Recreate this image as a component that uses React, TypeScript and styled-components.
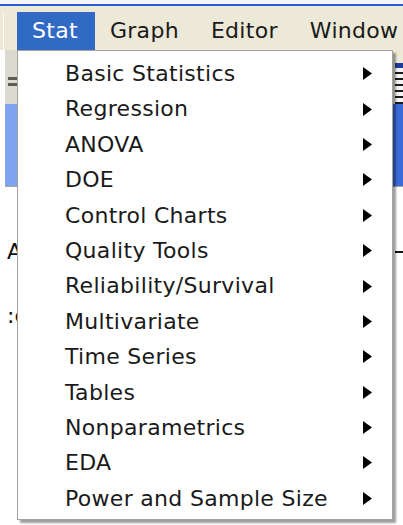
import React from "react";
import styled, { createGlobalStyle } from "styled-components";

const GlobalStyle = createGlobalStyle`
  html, body { margin: 0; padding: 0; background: #ffffff; }
  body { font-family: "DejaVu Sans", Verdana, sans-serif; }
`;

const Screen = styled.div`
  position: relative;
  width: 403px;
  height: 525px;
  overflow: hidden;
  display: flex;
  flex-direction: column;
  background: #ffffff;
  font-family: "DejaVu Sans", Verdana, sans-serif;
`;

const TitleEdge = styled.div`
  flex: none;
  height: 4px;
  background: #f6f7fb;
  border-bottom: 2px solid #2d5cd2;
`;

const MenuBar = styled.div`
  flex: none;
  height: 44px;
  display: flex;
  align-items: flex-end;
  background: #ece9d8;
`;

const Grip = styled.div`
  flex: none;
  width: 1px;
  height: 38px;
  margin: 0 13px 0 3px;
  background: #fbfaf4;
`;

const MenuTitle = styled.div<{ $active?: boolean }>`
  position: relative;
  height: 38px;
  padding: 0 17px 0 15px;
  line-height: 38px;
  font-size: 22px;
  letter-spacing: 0.3px;
  color: ${(p) => (p.$active ? "#ffffff" : "#1a1a1a")};
  background: ${(p) => (p.$active ? "#316ac5" : "transparent")};
  white-space: nowrap;
`;

const Dropdown = styled.div`
  position: absolute;
  top: 100%;
  left: 0;
  z-index: 10;
  box-sizing: border-box;
  width: 376px;
  padding: 5px 0 3px;
  background: #ffffff;
  border: 1px solid #a4a3a0;
  box-shadow: 3px 3px 2px rgba(0, 0, 0, 0.38);
`;

const MenuItem = styled.div`
  display: flex;
  align-items: center;
  justify-content: space-between;
  height: 35.4px;
  padding: 0 20px 0 47px;
  font-size: 22px;
  line-height: 35.4px;
  letter-spacing: 0.3px;
  color: #1a1a1a;
  white-space: nowrap;
`;

const Workspace = styled.div`
  flex: 1;
  display: flex;
  flex-direction: column;
  padding-left: 5px;
  background: #ffffff;
`;

const ToolbarBand = styled.div`
  flex: none;
  height: 54px;
  display: flex;
  justify-content: space-between;
  background: #ece9d8;
`;

const ToolStrip = styled.div`
  width: 40px;
  display: flex;
  flex-direction: column;
  justify-content: center;
  gap: 3px;
  padding-top: 8px;
  background: #dcd9ce;
`;

const ToolGlyph = styled.div`
  width: 12px;
  height: 3px;
  margin-left: 3px;
  background: #5e5b55;
`;

const GridCorner = styled.div`
  align-self: flex-end;
  width: 8px;
  height: 36px;
  border-top: 5px solid #1e3c9c;
  background: repeating-linear-gradient(
    to bottom,
    #f4f4f4 0px,
    #f4f4f4 4px,
    #1a1a1a 4px,
    #1a1a1a 6px
  );
`;

const SessionTitle = styled.div`
  flex: none;
  height: 82px;
  background: linear-gradient(to right, #7fa5ef 0%, #5d88e4 40%, #3a6bd8 100%);
  border-bottom: 1px solid #a3a3a3;
`;

const SessionBody = styled.div`
  flex: 1;
  display: flex;
  flex-direction: column;
  gap: 34px;
  padding-top: 50px;
`;

const SessionLine = styled.div`
  display: flex;
  align-items: center;
  justify-content: space-between;
  height: 30px;
  padding-left: 2px;
  font-size: 22px;
  line-height: 30px;
  color: #111111;
`;

const Dash = styled.div`
  width: 8px;
  height: 2px;
  background: #111111;
`;

const Arrow = () => (
  <svg width="10" height="13" viewBox="0 0 10 13" aria-hidden="true">
    <path d="M1 0 L10 6.5 L1 13 Z" fill="#000000" />
  </svg>
);

const statItems = [
  "Basic Statistics",
  "Regression",
  "ANOVA",
  "DOE",
  "Control Charts",
  "Quality Tools",
  "Reliability/Survival",
  "Multivariate",
  "Time Series",
  "Tables",
  "Nonparametrics",
  "EDA",
  "Power and Sample Size",
];

export default function App() {
  return (
    <Screen>
      <GlobalStyle />
      <TitleEdge />
      <MenuBar>
        <Grip />
        <MenuTitle $active>
          Stat
          <Dropdown>
            {statItems.map((label) => (
              <MenuItem key={label}>
                <span>{label}</span>
                <Arrow />
              </MenuItem>
            ))}
          </Dropdown>
        </MenuTitle>
        <MenuTitle>Graph</MenuTitle>
        <MenuTitle>Editor</MenuTitle>
        <MenuTitle>Window</MenuTitle>
      </MenuBar>
      <Workspace>
        <ToolbarBand>
          <ToolStrip>
            <ToolGlyph />
            <ToolGlyph />
          </ToolStrip>
          <GridCorner />
        </ToolbarBand>
        <SessionTitle />
        <SessionBody>
          <SessionLine>
            <span>A</span>
            <Dash />
          </SessionLine>
          <SessionLine>
            <span>:c</span>
          </SessionLine>
        </SessionBody>
      </Workspace>
    </Screen>
  );
}
